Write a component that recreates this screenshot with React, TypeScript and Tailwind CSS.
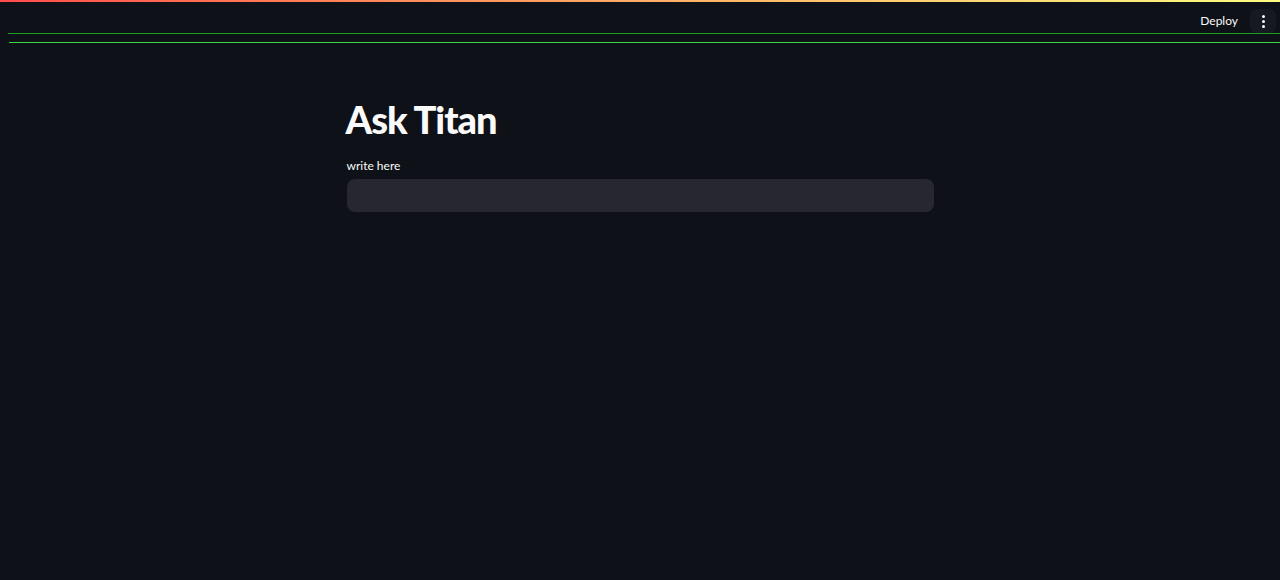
import React from 'react'

function Header() {
  return (
    <header className="relative h-[60px]">
      <div className="h-[2px] bg-gradient-to-r from-[#ff4b4b] to-[#fffd80]" />
      <div className="flex items-center justify-end gap-[10px] pr-[4px] pt-[7px]">
        <button className="text-[12px] leading-[24px] text-[#fafafa] px-[2px]" style={{ fontFamily: 'Lato, sans-serif' }}>Deploy</button>
        <button className="w-[26px] h-[24px] rounded-[6px] bg-[#161922] flex flex-col items-center justify-center gap-[2px]">
          <span className="w-[3px] h-[3px] rounded-full bg-[#fafafa]" />
          <span className="w-[3px] h-[3px] rounded-full bg-[#fafafa]" />
          <span className="w-[3px] h-[3px] rounded-full bg-[#fafafa]" />
        </button>
      </div>
      <div className="absolute left-[8px] right-0 top-[33px] h-px bg-[#1f9f1f]" />
      <div className="absolute left-[9px] right-0 top-[42px] h-px bg-[#3fd63f]" />
    </header>
  )
}

export default function App() {
  return (
    <div className="min-h-[580px] bg-[#0e1117] text-[#fafafa]" style={{ fontFamily: 'Lato, "Open Sans", sans-serif' }}>
      <Header />
      <main className="w-[587px] mx-auto pt-[29px]">
        <h1 className="text-[38px] leading-[60px] font-black tracking-[-1px] -ml-[1px]">Ask Titan</h1>
        <label className="block mt-[9px] text-[12px] leading-[16px] text-[#fafafa]">write here</label>
        <div className="mt-[5px] h-[33px] rounded-[8px] bg-[#262730]" />
      </main>
    </div>
  )
}
